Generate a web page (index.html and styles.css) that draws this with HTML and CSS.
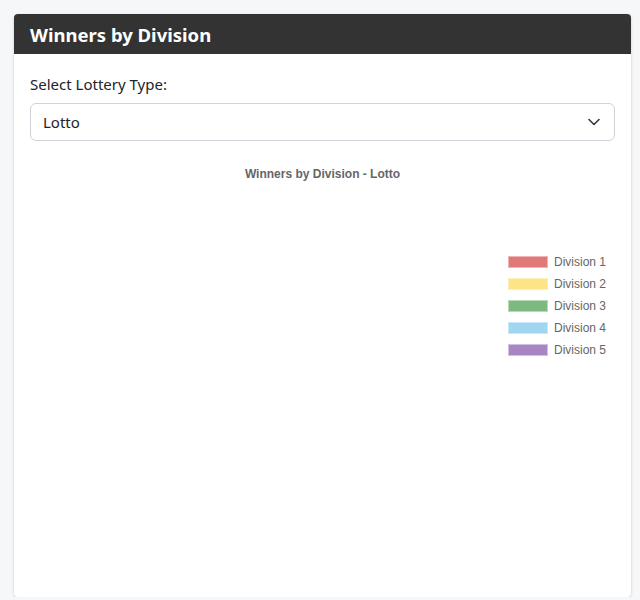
FILE: index.html
```html
<!DOCTYPE html>
<html>
<head>
<meta charset="utf-8">
<link rel="stylesheet" href="styles.css">
</head>
<body>
<div class="page">
  <div class="card">
    <div class="card-header">Winners by Division</div>
    <div class="card-body">
      <label class="field-label">Select Lottery Type:</label>
      <div class="select">
        <span>Lotto</span>
        <svg class="chev" width="12" height="8" viewBox="0 0 12 8"><path d="M1 1.5 L6 6.5 L11 1.5" fill="none" stroke="#343a40" stroke-width="1.6" stroke-linecap="round" stroke-linejoin="round"/></svg>
      </div>
      <div class="chart">
        <div class="chart-title">Winners by Division - Lotto</div>
        <div class="legend">
          <div class="legend-item"><span class="swatch s1"></span>Division 1</div>
          <div class="legend-item"><span class="swatch s2"></span>Division 2</div>
          <div class="legend-item"><span class="swatch s3"></span>Division 3</div>
          <div class="legend-item"><span class="swatch s4"></span>Division 4</div>
          <div class="legend-item"><span class="swatch s5"></span>Division 5</div>
        </div>
      </div>
    </div>
  </div>
</div>
</body>
</html>
```
FILE: styles.css
```css
html, body {
  margin: 0;
  padding: 0;
  background: #f6f7f9;
  font-family: "Noto Sans", "Open Sans", sans-serif;
}
.page {
  padding: 14px 9px 0 14px;
}
.card {
  background: #fff;
  border-radius: 4px;
  box-shadow: 0 1px 3px rgba(0,0,0,0.18);
  height: 583px;
  display: flex;
  flex-direction: column;
}
.card-header {
  background: #333333;
  color: #fff;
  font-weight: 700;
  font-size: 18.5px;
  height: 40px;
  line-height: 42px;
  padding: 0 16px;
  border-radius: 4px 4px 0 0;
}
.card-body {
  padding: 18px 16px 16px 16px;
  display: flex;
  flex-direction: column;
}
.field-label {
  font-size: 15px;
  color: #212529;
  line-height: 24px;
  margin-bottom: 7px;
}
.select {
  height: 36px;
  border: 1px solid #ced4da;
  border-radius: 6px;
  display: flex;
  align-items: center;
  justify-content: space-between;
  padding: 0 14px 0 12px;
  font-size: 15px;
  color: #212529;
}
.chev {
  display: block;
}
.chart {
  display: flex;
  flex-direction: column;
  padding-top: 25px;
}
.chart-title {
  font-family: "Liberation Sans", Arial, sans-serif;
  font-weight: 700;
  font-size: 12px;
  color: #666;
  text-align: center;
  line-height: 16px;
}
.legend {
  align-self: flex-end;
  margin-right: 9px;
  margin-top: 73px;
  display: flex;
  flex-direction: column;
  gap: 8px;
}
.legend-item {
  display: flex;
  align-items: center;
  font-family: "Liberation Sans", Arial, sans-serif;
  font-size: 12px;
  color: #666;
  line-height: 14px;
}
.swatch {
  width: 38px;
  height: 10px;
  margin-right: 6px;
  border: 1px solid;
}
.s1 { background: #e07a78; border-color: #f0b5b3; }
.s2 { background: #fde587; border-color: #fdf0bf; }
.s3 { background: #7cba7f; border-color: #b7dab8; }
.s4 { background: #a0d6f0; border-color: #c9e8f6; }
.s5 { background: #a885c4; border-color: #d3c0e1; }
```
